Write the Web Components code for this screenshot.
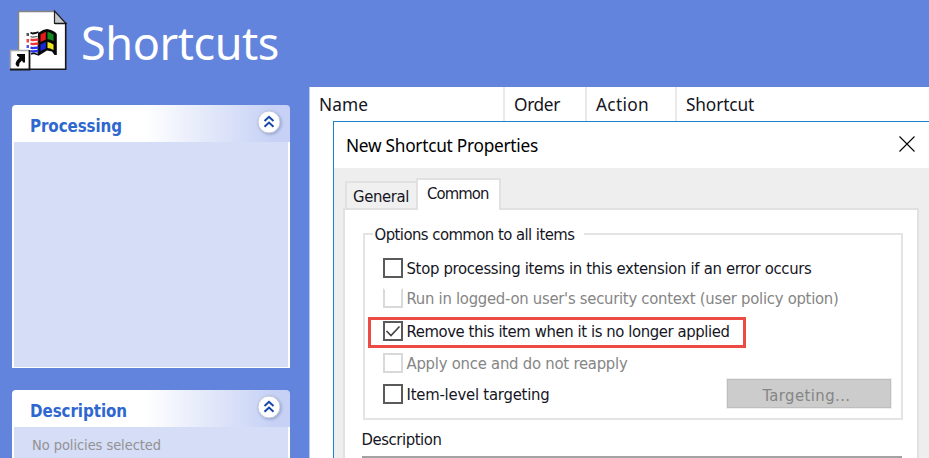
<!DOCTYPE html>
<html lang="en"><head><meta charset="utf-8"><title>Shortcuts</title>
<style>html,body{margin:0;height:458px;overflow:hidden;background:#6384dd}</style></head><body>
<policy-console></policy-console>
<script>
const define=(name,html,init)=>customElements.define(name,class extends HTMLElement{
  connectedCallback(){
    if(this.shadowRoot)return;
    const t=document.createElement('template');t.innerHTML=html;
    this.attachShadow({mode:'open'}).append(t.content.cloneNode(true));
    if(init)init(this,this.shadowRoot);
  }
});

// One line of text whose letter spacing is set so that it spans "w" pixels.
define('ui-text',`<style>:host{display:block;font:16.500px/20px "DejaVu Sans Condensed","DejaVu Sans",sans-serif;font-stretch:condensed;height:20px;white-space:nowrap;color:#151523}
:host([face=segoe]){font:17.3px/20px "Noto Sans",sans-serif}
span{display:inline-block}</style><span><slot></slot></span>`,(el,r)=>{
  const s=r.querySelector('span'),w=+el.getAttribute('w');
  if(w)s.style.letterSpacing=((w-s.getBoundingClientRect().width)/el.textContent.length)+'px';
});

define('shortcut-icon',`<style>:host{display:block;width:60px;height:62px}svg{display:block}</style>
<svg width="60" height="62" viewBox="8 9 60 62">
<path d="M18.5 11.5H54L66 24V70H18.5Z" fill="#fff"/><path d="M18.5 59V11.5H54" fill="none" stroke="#858585" stroke-width="1.5"/>
<path d="M54.5 11L66 23.5H54.5Z" fill="#c5c8cd" stroke="#222" stroke-width="1.2"/><path d="M55 23.5H65.7V69.3H18" fill="none" stroke="#171717" stroke-width="1.6"/>
<path d="M38 33L43 30L47 29L51 30L55 32L56.800 34V55H54.500L52 51.500L47 50.500L43 53L39 55.500L37.500 53Z" fill="#080808"/>
<path d="M40.500 34.500L45.800 31.800V39.500L40.500 42Z" fill="#e51b17"/><path d="M47.500 31.800Q50 32.200 53.500 34.500V41Q50 39 47.500 39.200Z" fill="#168a20"/>
<path d="M40.500 44.500L45.800 42V48.500L40.500 51Z" fill="#1728dc"/><path d="M47.500 42Q50 42 53.500 44.500V50Q50 48 47.500 48Z" fill="#eee623"/>
<g fill="none"><path d="M30.500 32.500l2 1 3-.5 3-1" stroke="#111" stroke-width="1.800"/><path d="M30.500 36.500l2 .7 5-.7" stroke="#555" stroke-width="1.200"/><path d="M30.500 39.500l2 .7 6-.7M30.500 43.500l2 .7 6-.7" stroke="#ef3434" stroke-width="2.300"/><path d="M30.500 47.500l2 .7 6-.7M30.500 51l2 .5 6-.5" stroke="#2734ea" stroke-width="2.300"/><path d="M31 54l3-.7 2 .7 3 1" stroke="#111" stroke-width="1.500"/></g>
<path d="M26.500 33h2.500v3h-2.500z" fill="#555"/><path d="M26.500 39h2.500v3.500h-2.500z" fill="#e44"/><path d="M26.500 45h2.500v3h-2.500z" fill="#55d"/><path d="M26.500 50h2.500v2h-2.500z" fill="#99a"/>
<path d="M10.500 50.500H29V69H10.500Z" fill="#fff"/><path d="M10.500 69V50.500H29" fill="none" stroke="#aaa" stroke-width="1.500"/><path d="M29.500 50V69.500H10" fill="none" stroke="#151515" stroke-width="1.800"/>
<path d="M17 54H25V62.500H23L22 60.500L19.500 63L19 66.500H17L15.500 64L16.500 61L19.500 57.500L17 55.500Z" fill="#080808"/></svg>`);

define('collapse-button',`<style>:host{display:block;width:24px;height:24px}svg{display:block;filter:drop-shadow(1px 1px 1.500px #6d7ba799)}</style>
<svg width="24" height="24" viewBox="0 0 24 24"><circle cx="12" cy="12" r="11" fill="#fff" stroke="#c0c7dc"/><path d="M7.500 11L12 6.800L16.500 11M7.500 16.800L12 12.600L16.500 16.800" fill="none" stroke="#1648a9" stroke-width="2"/></svg>`);

define('side-panel',`<style>:host{display:flex;flex-direction:column;flex:none;width:278px;box-sizing:border-box}
header{display:flex;justify-content:space-between;height:37px;box-sizing:border-box;padding:11px 9px 0 18px;border-radius:4px 4px 0 0;background:linear-gradient(90deg,#fff 48%,#c6d1f5 94%)}
ui-text{font-weight:bold;font-size:16.800px;color:#2e67cf}collapse-button{margin-top:-6px}
section{flex:1;border:solid #fff;border-width:0 2px 1.500px;background:#d6ddf7;padding:8px 0 0 18px}</style>
<header><ui-text></ui-text><collapse-button></collapse-button></header><section><slot></slot></section>`,(el,r)=>{
  const t=document.createElement('ui-text');t.textContent=el.getAttribute('heading');t.setAttribute('w',el.getAttribute('w'));
  r.querySelector('ui-text').replaceWith(t);
});

define('column-cell',`<style>:host{display:block;box-sizing:border-box;height:34px;padding:8px 0 0 9px;border-right:2px solid #e9e9e9}</style><slot></slot>`);

define('check-row',`<style>:host{display:flex;gap:4px;height:20px;align-items:flex-start}
i{box-sizing:border-box;width:20px;height:20px;border:2px solid #5a5a5a;flex:none;background:#fff}
:host([disabled]) i{border-color:#d9d9d9}:host([cut]) i{border-top-color:transparent}
svg{display:none}:host([checked]) svg{display:block}</style>
<i><svg width="16" height="16" viewBox="0 0 16 16"><path d="M1.500 8L6 12.500L14.500 3.500" fill="none" stroke="#444" stroke-width="1.700"/></svg></i><slot></slot>`);

define('options-group',`<style>:host{display:grid;grid-template-columns:1fr;width:540px;height:187px;box-sizing:border-box;border:2px solid #e4e4e4;position:relative;align-content:start}
.legend{position:absolute;left:8px;top:-10px;height:20px;width:211px;background:#fff;padding-left:2px;box-sizing:border-box}
.rows{padding:23px 0 0 18px;display:flex;flex-direction:column}
check-row{margin-bottom:11px}check-row ui-text{margin-top:1px}
[disabled] ui-text{color:#858585}
.last{display:flex;justify-content:space-between;align-items:flex-start;padding-right:10px}
button{all:unset;box-sizing:border-box;width:164px;height:29px;margin-top:-5px;padding:5px 0 0 35px;background:#ccc;border:1px solid #bebebe;outline:1px solid #eee}
button ui-text{color:#858585}
.mark{position:absolute;left:3px;top:82px;width:378px;height:31px;border:3px solid #ec4b44;box-sizing:border-box}</style>
<div class="legend"><ui-text w="200">Options common to all items</ui-text></div>
<div class="rows">
<check-row><ui-text w="405">Stop processing items in this extension if an error occurs</ui-text></check-row>
<check-row disabled cut style="margin-bottom:13px;margin-top:-1px"><ui-text w="432">Run in logged-on user's security context (user policy option)</ui-text></check-row>
<check-row checked style="margin-bottom:12px"><ui-text w="323">Remove this item when it is no longer applied</ui-text></check-row>
<check-row disabled><ui-text w="221">Apply once and do not reapply</ui-text></check-row>
<div class="last"><check-row><ui-text w="143">Item-level targeting</ui-text></check-row><button><ui-text w="88">Targeting...</ui-text></button></div>
</div><div class="mark"></div>`);

define('tab-strip',`<style>:host{display:flex;align-items:flex-end;height:31px;padding-left:2px;margin-bottom:-2px;position:relative}
div{box-sizing:border-box;border:2px solid #e1e1e1;border-bottom:0}
.general{width:71px;height:29px;padding:4px 0 0 6px;background:#f0f0f0;border-right:0;border-bottom:2px solid #e1e1e1}
.common{width:85px;height:32px;padding:4px 0 0 9px;background:#fff}</style>
<div class="general"><ui-text w="56">General</ui-text></div><div class="common"><ui-text w="61.500">Common</ui-text></div>`);

define('properties-dialog',`<style>:host{display:block;box-sizing:border-box;width:596px;height:337px;border:1px solid #1c82cc;border-right:0;border-bottom:0;background:#eee;overflow:hidden}
header{display:flex;justify-content:space-between;height:46px;box-sizing:border-box;padding:14px 14px 0 12px;background:#fff}header ui-text{color:#000}
main{padding:11px 10px 0 9px}.page{box-sizing:border-box;width:576px;height:270px;background:#fff;border:2px solid #e1e1e1;padding:23px 0 0 17.500px}
.desc{margin-top:10px}.field{width:540px;height:30px;border:2px solid #a3a3a3;box-sizing:border-box;margin-top:6px}
.desc,.field{margin-left:-1px}</style>
<header><ui-text face="segoe" w="192">New Shortcut Properties</ui-text><svg width="16" height="16"><path d="M.5.5L15.500 15.500M15.500.5L.5 15.500" stroke="#000" stroke-width="1.100"/></svg></header>
<main><tab-strip></tab-strip><div class="page"><options-group></options-group><ui-text class="desc" w="80">Description</ui-text><div class="field"></div></div></main>`);

define('policy-console',`<style>:host{display:grid;grid-template:87px 371px/309px 620px;width:929px;height:458px;background:#6384dd;overflow:hidden}
.top{grid-column:1/3;display:flex;padding:9px 0 0 8px;gap:13px}
.top ui-text{font:45px/60px "Noto Sans",sans-serif;color:#fff;height:60px;margin-top:4px}
aside{padding:18px 0 0 12px;display:flex;flex-direction:column;gap:22px;min-height:0}
.list{background:#fff;border-left:1px solid #b8c7f0;display:flex;flex-direction:column;box-sizing:border-box}
.cols{display:grid;grid-template-columns:195px 82px 90px 1fr;height:34px}
column-cell:last-child{border:0}properties-dialog{margin-left:23px}
.note{font-size:14.500px;color:#929292}</style>
<div class="top"><shortcut-icon></shortcut-icon><ui-text w="198">Shortcuts</ui-text></div>
<aside><side-panel heading="Processing" w="92" style="height:263px"></side-panel><side-panel heading="Description" w="97" style="height:120px"><ui-text class="note" w="129">No policies selected</ui-text></side-panel></aside>
<div class="list"><div class="cols"><column-cell><ui-text face="segoe" w="49">Name</ui-text></column-cell><column-cell><ui-text face="segoe" w="46">Order</ui-text></column-cell><column-cell><ui-text face="segoe" w="53">Action</ui-text></column-cell><column-cell><ui-text face="segoe" w="68">Shortcut</ui-text></column-cell></div><properties-dialog></properties-dialog></div>`);
</script></body></html>
